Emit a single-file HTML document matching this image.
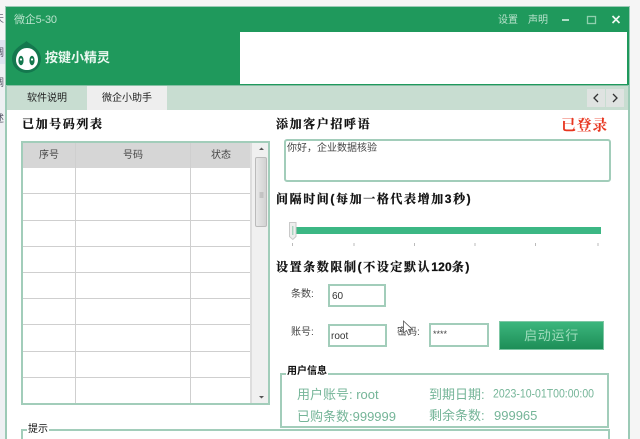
<!DOCTYPE html>
<html lang="zh"><head><meta charset="utf-8"><title>微企5-30</title>
<style>
html,body{margin:0;padding:0;width:640px;height:439px;overflow:hidden;background:#f5f5f5;font-family:"Liberation Sans","Noto Sans CJK SC",sans-serif}
#root{position:relative;width:640px;height:439px;overflow:hidden;filter:blur(.35px)}
.a{position:absolute;white-space:nowrap}
#win{position:absolute;left:5px;top:6px;width:625px;height:440px;background:#fff;border:2px solid #9ccab6;box-sizing:border-box}
.h{font-family:"Liberation Sans","Noto Serif CJK SC",serif;font-weight:700;font-size:12px;letter-spacing:1.6px;color:#111;line-height:16px;-webkit-text-stroke:.25px #111}
.h span{letter-spacing:.2px}
.b{border:2px solid #a2cdba;box-sizing:border-box;background:#fff}
.t{font-size:10px;color:#444;line-height:14px}
.g{font-size:13px;color:#75b598;line-height:18px}
.l{position:absolute;background:#cfcfcf}
</style></head><body><div id="root">
<div class="a" style="left:0;top:40px;width:5px;height:400px;background:#eef0f3"></div>
<div class="a" style="left:0;top:40px;width:5px;height:24px;background:#dfe3f0"></div>
<div class="a" style="left:-6px;top:13px;font-size:10px;color:#667;line-height:14px">天</div>
<div class="a" style="left:-6px;top:47px;font-size:10px;color:#556;line-height:14px">调</div>
<div class="a" style="left:-6px;top:77px;font-size:10px;color:#556;line-height:14px">调</div>
<div class="a" style="left:-6px;top:113px;font-size:10px;color:#556;line-height:14px">述</div>
<div id="win"></div>
<div class="a" style="left:6px;top:7px;width:623px;height:78px;background:#1f995c"></div>
<div class="a" style="left:240px;top:32px;width:387px;height:52px;background:#fff"></div>
<div class="a" style="left:14px;top:13px;font-size:11px;color:#b9e2cc;line-height:14px;letter-spacing:-.2px">微企5-30</div>
<div class="a" style="left:498px;top:14px;font-size:10px;color:#b9e2cc;line-height:14px">设置</div>
<div class="a" style="left:528px;top:14px;font-size:10px;color:#b9e2cc;line-height:14px">声明</div>
<svg class="a" style="left:558px;top:12px" width="70" height="16" viewBox="0 0 70 16">
<path d="M4 8h7" stroke="#d5efe1" stroke-width="1.6"/>
<rect x="29.5" y="4.500" width="8" height="7" fill="none" stroke="#8fd0ae" stroke-width="1.3"/>
<path d="M54.500 4l7 7m0-7l-7 7" stroke="#eef8f2" stroke-width="1.7"/></svg>
<svg class="a" style="left:11px;top:40px" width="32" height="34" viewBox="0 0 32 34">
<path d="M15.500 1C18 4 30 8 30 19A14.500 14 0 0 1 1 19C1 8 13 4 15.500 1Z" fill="#14784e"/>
<path d="M16 8C23 8 27 14 27 20C27 26 22 30 16 30C10 30 5 26 5 20C5 14 9 8 16 8Z" fill="#fff"/>
<ellipse cx="10" cy="20.500" rx="2.600" ry="4.800" fill="#14784e"/><ellipse cx="21" cy="20.500" rx="2.600" ry="4.800" fill="#14784e"/>
<circle cx="10" cy="19.500" r="1.100" fill="#fff"/><circle cx="21" cy="19.500" r="1.100" fill="#fff"/></svg>
<div class="a" style="left:45px;top:49px;font-size:13px;font-weight:700;color:#eaf7f0;line-height:17px">按键小精灵</div>

<div class="a" style="left:7px;top:85px;width:621px;height:25px;background:#c8ddd1;border-top:1px solid #86bfa4;box-sizing:border-box"></div>
<div class="a" style="left:87px;top:86px;width:80px;height:24px;background:#eee"></div>
<div class="a t" style="left:27px;top:92px;color:#222">软件说明</div>
<div class="a t" style="left:102px;top:92px;color:#222">微企小助手</div>
<div class="a" style="left:587px;top:89px;width:18px;height:18px;background:#dfe3e1"></div>
<div class="a" style="left:606px;top:89px;width:18px;height:18px;background:#dfe3e1"></div>
<svg class="a" style="left:587px;top:89px" width="38" height="18" viewBox="0 0 38 18"><path d="M11 5l-4 4 4 4M26 5l4 4-4 4" fill="none" stroke="#333" stroke-width="1.300"/></svg>

<div class="a h" style="left:22px;top:116px">已加号码列表</div>
<div class="a h" style="left:276px;top:116px">添加客户招呼语</div>
<div class="a" style="left:561px;top:117px;font-size:15px;font-weight:700;font-family:'Liberation Serif','Noto Serif CJK SC',serif;color:#e8351f;letter-spacing:.6px;line-height:18px">已登录</div>

<div class="a b" style="left:21px;top:141px;width:249px;height:264px"></div>
<div class="a" style="left:23px;top:143px;width:227px;height:25px;background:#d6d6d6"></div>
<div class="a" style="left:250px;top:143px;width:18px;height:260px;background:#f0f0f0;border-left:2px solid #ddd;box-sizing:border-box"></div>
<div class="a" style="left:255px;top:157px;width:12px;height:70px;background:linear-gradient(90deg,#e8e8e8,#d2d2d2);border:1px solid #bbb;border-radius:2px;box-sizing:border-box"></div>
<svg class="a" style="left:255px;top:146px" width="12" height="256" viewBox="0 0 12 256"><path d="M4 4h5L6.500 1.500ZM4 250h5L6.500 252.500Z" fill="#555"/><path d="M4.500 47h4M4.500 49h4M4.500 51h4" stroke="#999" stroke-width=".7"/></svg>
<div class="l" style="left:75px;top:143px;width:1px;height:260px"></div>
<div class="l" style="left:190px;top:143px;width:1px;height:260px"></div>
<div class="l" style="left:23px;top:193px;width:227px;height:1px"></div>
<div class="l" style="left:23px;top:220px;width:227px;height:1px"></div>
<div class="l" style="left:23px;top:246px;width:227px;height:1px"></div>
<div class="l" style="left:23px;top:272px;width:227px;height:1px"></div>
<div class="l" style="left:23px;top:298px;width:227px;height:1px"></div>
<div class="l" style="left:23px;top:324px;width:227px;height:1px"></div>
<div class="l" style="left:23px;top:351px;width:227px;height:1px"></div>
<div class="l" style="left:23px;top:377px;width:227px;height:1px"></div>
<div class="a t" style="left:39px;top:149px">序号</div>
<div class="a t" style="left:123px;top:149px">号码</div>
<div class="a t" style="left:211px;top:149px">状态</div>

<div class="a b" style="left:284px;top:139px;width:327px;height:43px;border-radius:3px"></div>
<div class="a t" style="left:287px;top:142px">你好，企业数据核验</div>

<div class="a h" style="left:276px;top:191px">间隔时间(每加一格代表增加3秒)</div>
<div class="a" style="left:296px;top:227px;width:305px;height:7px;background:#3cb784"></div>
<svg class="a" style="left:288px;top:221px" width="10" height="20" viewBox="0 0 10 20"><path d="M1.500 1.500h6.500v14L4.800 18.500 1.500 15.500Z" fill="#eee" stroke="#c9c9c9"/><path d="M4.800 5v9" stroke="#8cc9ab"/></svg>
<svg class="a" style="left:290px;top:242px" width="312" height="5" viewBox="0 0 312 5"><path d="M2.500 1v3M64 1v3M124.500 1v3M185 1v3M245.500 1v3M308 1v3" stroke="#bbb"/></svg>

<div class="a h" style="left:276px;top:259px">设置条数限制(不设定默认<span>120</span>条)</div>
<div class="a t" style="left:291px;top:288px">条数:</div>
<div class="a b" style="left:328px;top:284px;width:58px;height:23px"></div>
<div class="a t" style="left:332px;top:290px;color:#333">60</div>
<div class="a t" style="left:291px;top:326px">账号:</div>
<div class="a b" style="left:328px;top:324px;width:59px;height:23px"></div>
<div class="a t" style="left:331px;top:330px;color:#333">root</div>
<div class="a t" style="left:397px;top:326px">密码:</div>
<div class="a b" style="left:429px;top:323px;width:60px;height:24px"></div>
<div class="a t" style="left:433px;top:329px;font-size:9px;color:#444;line-height:10px">****</div>
<svg class="a" style="left:402px;top:320px" width="12" height="18" viewBox="0 0 12 18"><path d="M1.500 1v12l3-2.500 2 4.500 2-1-2-4.500h4Z" fill="#fff" stroke="#555" stroke-width=".8"/></svg>
<div class="a" style="left:499px;top:321px;width:105px;height:29px;background:linear-gradient(#3cb67d,#1d8e57);border:1px solid #7fc7a5;box-sizing:border-box;color:#9fdcbc;font-size:13px;line-height:27px;text-align:center;letter-spacing:.7px">启动运行</div>

<div class="a b" style="left:280px;top:373px;width:329px;height:55px"></div>
<div class="a" style="left:286px;top:365px;padding:0 1px;background:#fff;font-size:10px;font-weight:700;color:#111;line-height:14px">用户信息</div>
<div class="a g" style="left:297px;top:386px">用户账号: root</div>
<div class="a g" style="left:297px;top:408px">已购条数:999999</div>
<div class="a g" style="left:429px;top:386px">到期日期:</div>
<div class="a" style="left:493px;top:387px;font-size:10.500px;line-height:15px;color:#75b598;transform:scaleY(1.150);transform-origin:left center">2023-10-01T00:00:00</div>
<div class="a g" style="left:429px;top:407px">剩余条数:</div>
<div class="a g" style="left:494px;top:407px">999965</div>

<div class="a b" style="left:21px;top:429px;width:589px;height:30px"></div>
<div class="a" style="left:27px;top:423px;padding:0 1px;background:#fff;font-size:10px;color:#111;line-height:14px">提示</div>
</div></body></html>
